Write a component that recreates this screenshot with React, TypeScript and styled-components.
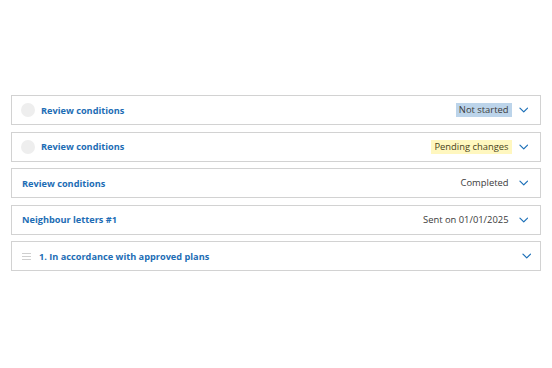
import React, { FC } from "react";
import styled, { createGlobalStyle } from "styled-components";

const GlobalStyle = createGlobalStyle`
  body {
    margin: 0;
    background: #ffffff;
    font-family: "Open Sans", "Liberation Sans", sans-serif;
  }
`;

type Tone = "blue" | "yellow" | "plain";

interface Item {
  title: string;
  status?: string;
  tone?: Tone;
  lead?: "circle" | "handle";
}

const items: Item[] = [
  { title: "Review conditions", status: "Not started", tone: "blue", lead: "circle" },
  { title: "Review conditions", status: "Pending changes", tone: "yellow", lead: "circle" },
  { title: "Review conditions", status: "Completed", tone: "plain" },
  { title: "Neighbour letters #1", status: "Sent on 01/01/2025", tone: "plain" },
  { title: "1. In accordance with approved plans", lead: "handle" },
];

const Chevron: FC = () => (
  <ScChevron viewBox="0 0 10 6" width="9.5" height="6">
    <path d="M1 1 L5 5 L9 1" fill="none" stroke="#1d70b8" strokeWidth="1.3" strokeLinecap="round" strokeLinejoin="round" />
  </ScChevron>
);

const Handle: FC = () => (
  <ScHandle viewBox="0 0 9 7" width="9" height="7">
    <path d="M0 0.5 H9 M0 3.5 H9 M0 6.5 H9" stroke="#cfcfcf" strokeWidth="1" />
  </ScHandle>
);

export default function App() {
  return (
    <>
      <GlobalStyle />
      <ScPage>
        <ScList>
          {items.map((item, i) => (
            <ScCard key={i} $wide={item.lead === "handle"}>
              <ScLeft>
                {item.lead === "circle" && <ScCircle />}
                {item.lead === "handle" && <Handle />}
                <ScTitle $indent={item.lead === "handle"}>{item.title}</ScTitle>
              </ScLeft>
              <ScRight>
                {item.status && <ScStatus $tone={item.tone || "plain"}>{item.status}</ScStatus>}
                <Chevron />
              </ScRight>
            </ScCard>
          ))}
        </ScList>
      </ScPage>
    </>
  );
}

const ScPage = styled.main`
  padding: 95px 11px 0 11px;
  width: 530px;
`;

const ScList = styled.ul`
  list-style: none;
  margin: 0;
  padding: 0;
  display: flex;
  flex-direction: column;
  gap: 6.5px;
`;

const ScCard = styled.li<{ $wide: boolean }>`
  box-sizing: border-box;
  height: 30px;
  display: flex;
  justify-content: space-between;
  align-items: center;
  border: 1px solid #d2d2d2;
  padding: 0 ${({ $wide }) => ($wide ? "9px" : "12px")} 0 9px;
`;

const ScLeft = styled.div`
  display: flex;
  align-items: center;
  gap: 5px;
`;

const ScCircle = styled.span`
  width: 14px;
  height: 14px;
  border-radius: 50%;
  background: #eeeeee;
`;

const ScHandle = styled.svg`
  margin-left: 1px;
  margin-right: 3px;
`;

const ScTitle = styled.span<{ $indent: boolean }>`
  font-size: 9.2px;
  font-weight: 700;
  color: #1d6db5;
  padding-left: ${({ $indent }) => ($indent ? "0" : "1px")};
`;

const ScRight = styled.div`
  display: flex;
  align-items: center;
  gap: 7px;
`;

const ScStatus = styled.span<{ $tone: Tone }>`
  height: 14px;
  line-height: 14px;
  padding: 0 3px;
  font-size: 9.4px;
  color: ${({ $tone }) => ($tone === "yellow" ? "#4a4420" : "#3b3b3b")};
  background: ${({ $tone }) =>
    $tone === "blue" ? "#bcd4ea" : $tone === "yellow" ? "#fff7bf" : "transparent"};
`;

const ScChevron = styled.svg`
  display: block;
`;
